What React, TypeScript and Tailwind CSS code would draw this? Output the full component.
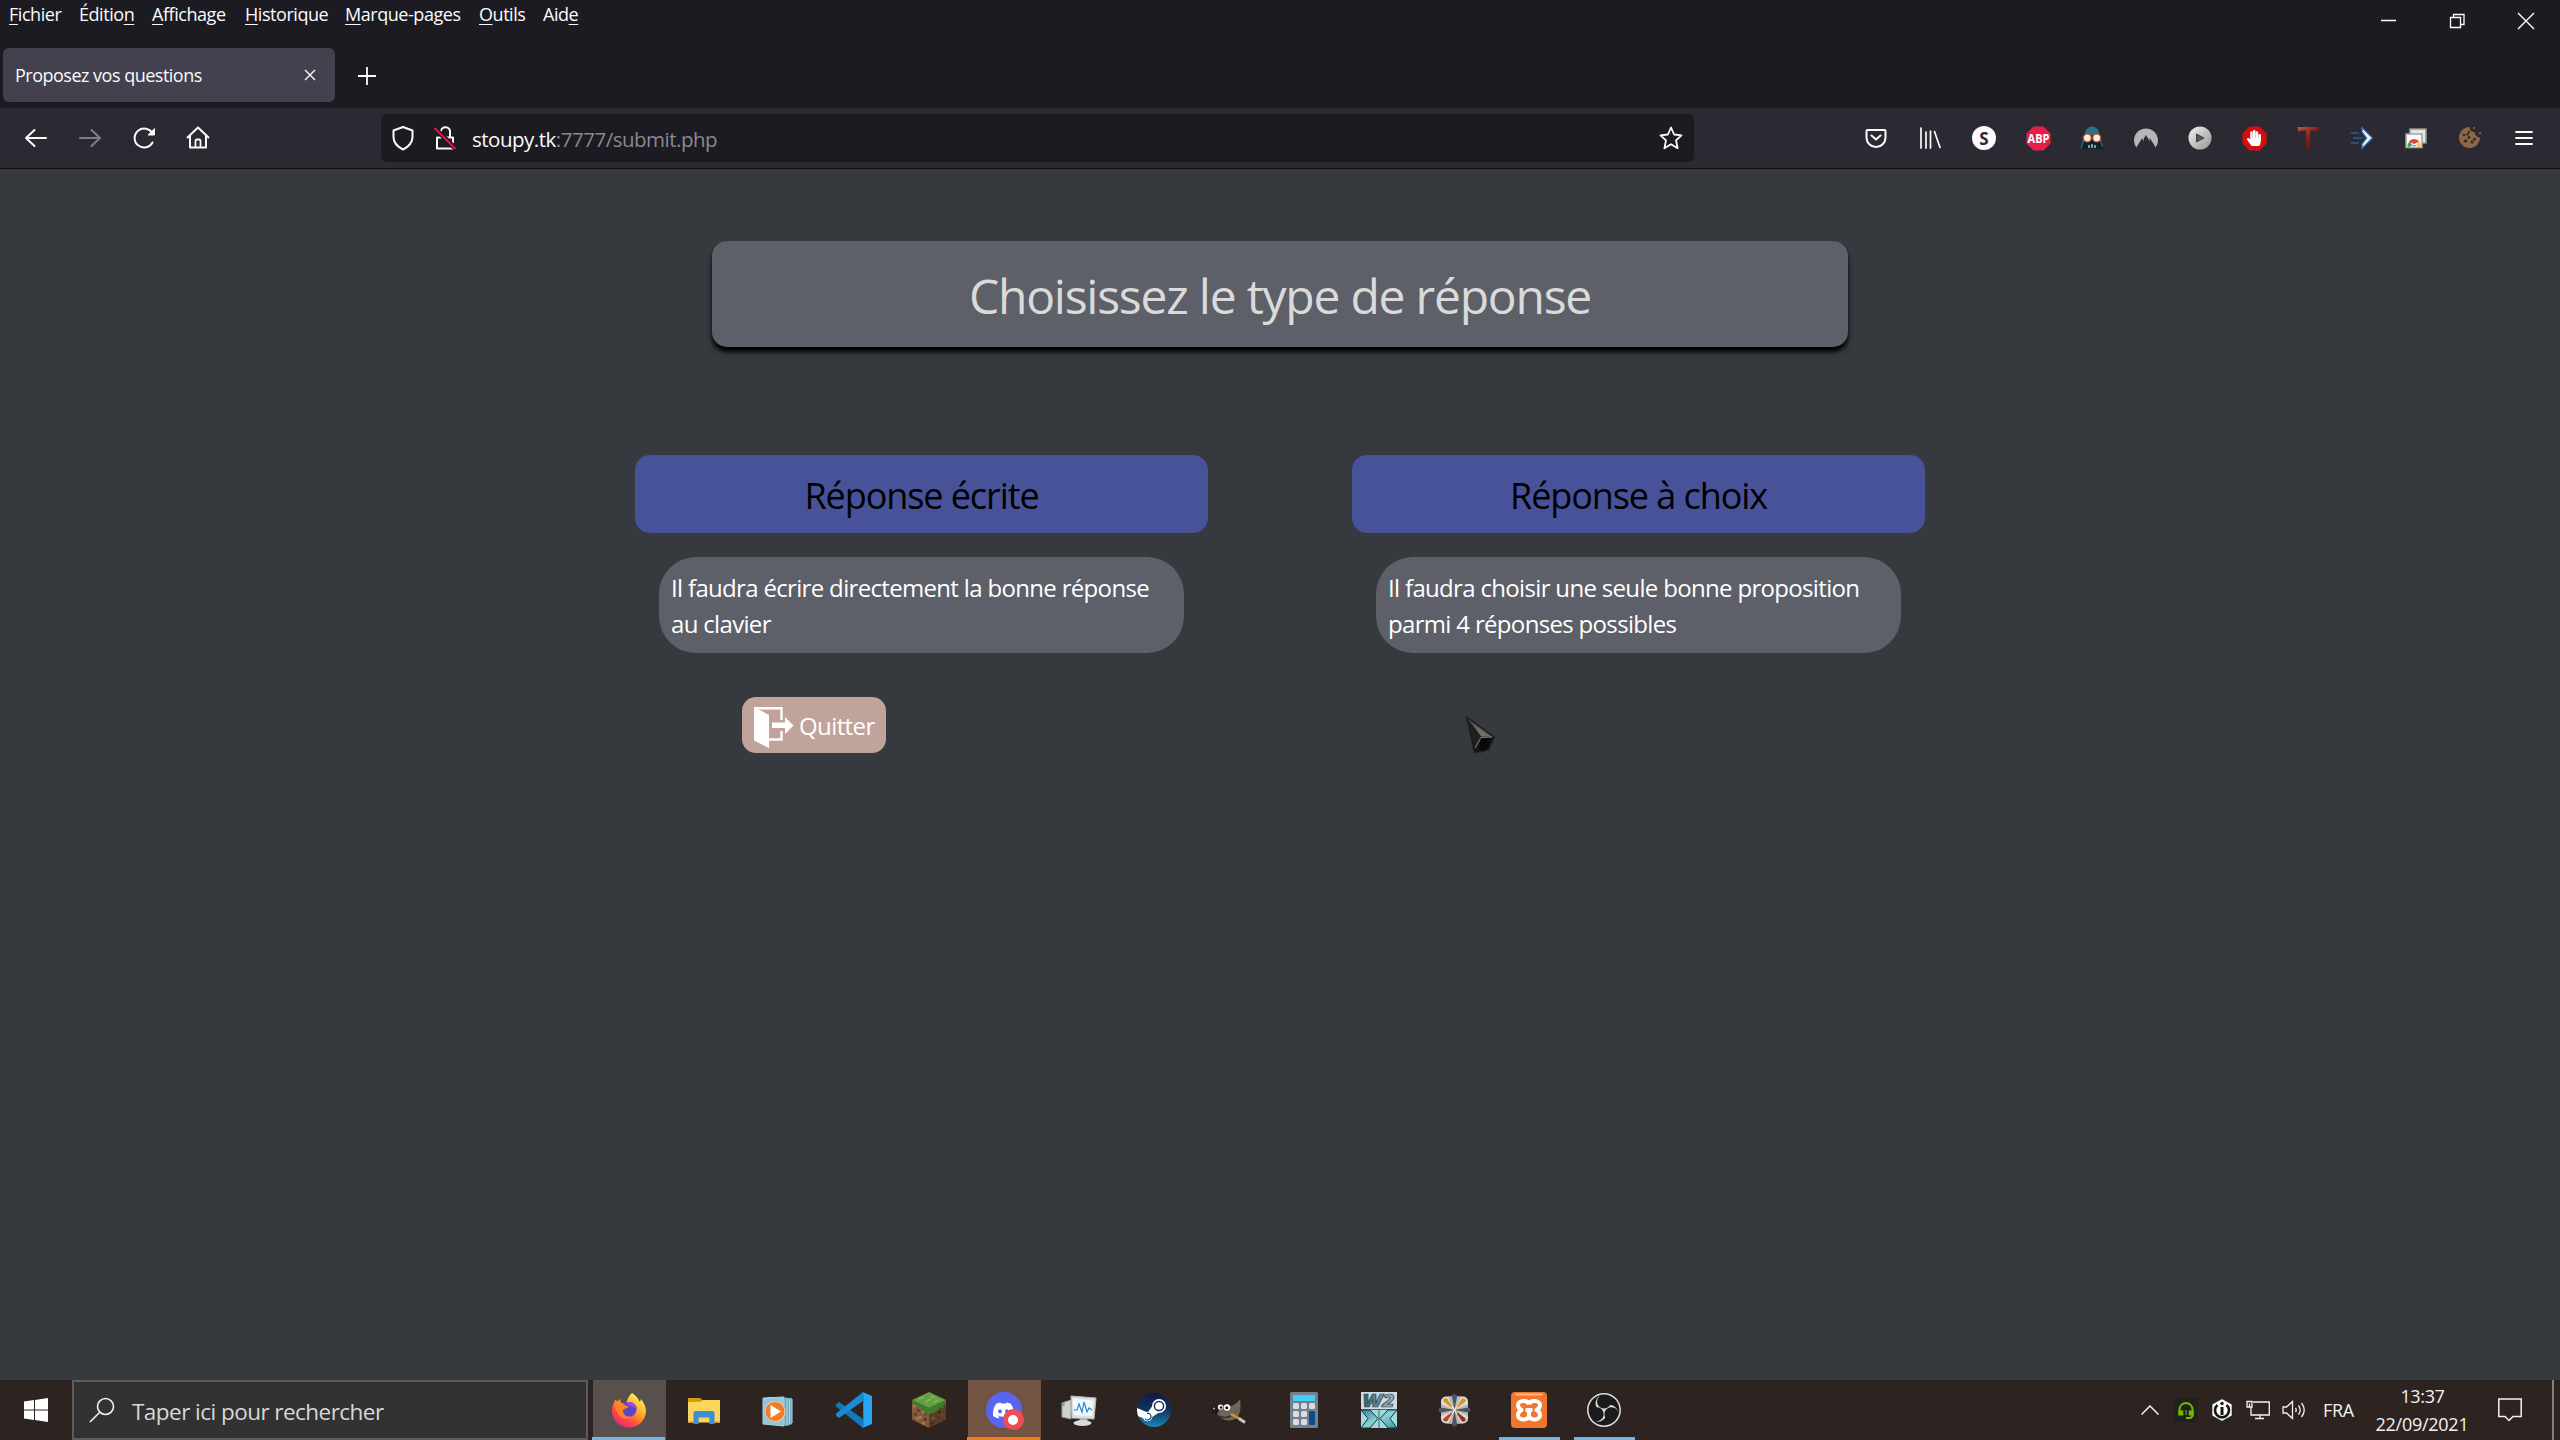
import type { ReactNode } from "react";
import { FaDiscord, FaHandPaper, FaCookieBite } from "react-icons/fa";
import { SiObsstudio, SiNordvpn } from "react-icons/si";

/* ---------- menu bar ---------- */

const MENUS: { before: string; key: string; after: string; box: string }[] = [
  { before: "", key: "F", after: "ichier", box: "w-[70px]" },
  { before: "Éditio", key: "n", after: "", box: "w-[73px]" },
  { before: "", key: "A", after: "ffichage", box: "w-[93px]" },
  { before: "", key: "H", after: "istorique", box: "w-[100px]" },
  { before: "", key: "M", after: "arque-pages", box: "w-[134px]" },
  { before: "", key: "O", after: "utils", box: "w-[64px]" },
  { before: "Aid", key: "e", after: "", box: "w-[60px]" },
];

function MenuBar() {
  return (
    <div className="flex h-[48px] items-start justify-between">
      <nav className="flex pl-[9px] text-[18px] leading-[29px] tracking-[-0.025em] text-[#fbfbfe]">
        {MENUS.map((m) => (
          <span key={m.key} className={`${m.box} whitespace-nowrap`}>
            {m.before}
            <span className="underline decoration-1 underline-offset-[3px]">{m.key}</span>
            {m.after}
          </span>
        ))}
      </nav>
      <div className="flex h-[42px] text-white">
        <svg className="h-[42px] w-[68px]" viewBox="0 0 68 42" stroke="currentColor" strokeWidth="1.5">
          <path d="M26 20.5h15" />
        </svg>
        <svg className="h-[42px] w-[69px]" viewBox="0 0 69 42" fill="none" stroke="currentColor" strokeWidth="1.3">
          <path d="M27.5 17.5h10v10h-10zM30.5 17.5v-3h10.5v10h-3.500" />
        </svg>
        <svg className="h-[42px] w-[68px]" viewBox="0 0 68 42" stroke="currentColor" strokeWidth="1.4">
          <path d="M26 13l16 16M42 13l-16 16" />
        </svg>
      </div>
    </div>
  );
}

function TabStrip() {
  return (
    <div className="flex h-[60px] items-start pl-[3px]">
      <div className="flex h-[54px] w-[332px] items-center justify-between rounded-[6px] bg-[#42414d] pl-[12px] pr-[18px]">
        <span className="text-[18px] tracking-[-0.028em] text-[#fbfbfe]">Proposez vos questions</span>
        <svg className="size-[14px]" viewBox="0 0 14 14" stroke="#fbfbfe" strokeWidth="1.4">
          <path d="M2 2l10 10M12 2L2 12" />
        </svg>
      </div>
      <svg className="mx-[22px] h-[56px] w-[20px]" viewBox="0 0 20 56" stroke="#fbfbfe" strokeWidth="1.800">
        <path d="M10 19v18M1 28h18" />
      </svg>
    </div>
  );
}

/* ---------- toolbar ---------- */

function Slot({ children }: { children: ReactNode }) {
  return <div className="flex h-[60px] w-[54px] items-center justify-center">{children}</div>;
}

function Icon24({ children }: { children: ReactNode }) {
  return (
    <svg className="size-[24px] overflow-visible" viewBox="0 0 24 24" fill="none" stroke="#fbfbfe" strokeWidth="2" strokeLinecap="round" strokeLinejoin="round">
      {children}
    </svg>
  );
}

function Extensions() {
  return (
    <div className="flex">
      <Slot>
        <Icon24>
          <path d="M3.500 4h17a1 1 0 0 1 1 1v6.500a9.500 9.500 0 0 1-19 0V5a1 1 0 0 1 1-1z" />
          <path d="M7.500 9.500L12 13.500l4.500-4" />
        </Icon24>
      </Slot>
      <Slot>
        <Icon24>
          <path d="M3 2v20M8 6v16M12.500 5v17M16.500 5.500L22 21.500" strokeWidth="1.700" />
        </Icon24>
      </Slot>
      <Slot>
        <span className="flex size-[24px] items-center justify-center rounded-full bg-[#fbfbfe] text-[17px] font-bold leading-none text-[#2b2a33]">S</span>
      </Slot>
      <Slot>
        <svg className="size-[25px]" viewBox="0 0 25 25">
          <path d="M7.500 0.500h10l7 7v10l-7 7h-10l-7-7v-10z" fill="#e81e48" />
          <text x="12.500" y="16.700" textAnchor="middle" textLength="22" lengthAdjust="spacingAndGlyphs" fontSize="11.500" fontWeight="700" fill="#fff">ABP</text>
        </svg>
      </Slot>
      <Slot>
        <svg className="size-[24px]" viewBox="0 0 24 24">
          <path d="M12 0.500C7 0.500 5 4 4.500 10L0 23h24l-4.500-13C19 4 17 0.500 12 0.500z" fill="#0f2129" />
          <path d="M12 0.500c-4.500 0-7 3.500-7.500 9h15C19 4 16.500 0.500 12 0.500z" fill="#2a7381" />
          <path d="M4 12L1 22.500M20 12l2.500 9" stroke="#2a7381" strokeWidth="1.300" />
          <circle cx="7.300" cy="12" r="3.900" fill="#fff2e4" stroke="#cb542f" strokeWidth="1.200" />
          <circle cx="16.700" cy="12" r="3.900" fill="#fff2e4" stroke="#cb542f" strokeWidth="1.200" />
          <path d="M9 19v3M12 18v4M15 19v3" stroke="#c3dce0" strokeWidth="1.300" />
        </svg>
      </Slot>
      <Slot>
        <SiNordvpn className="size-[24px] text-[#b6b6b9]" />
      </Slot>
      <Slot>
        <svg className="size-[24px]" viewBox="0 0 24 24">
          <defs>
            <linearGradient id="play" x1="0" y1="0" x2="1" y2="1">
              <stop offset="0" stopColor="#f4f4f2" />
              <stop offset="1" stopColor="#929292" />
            </linearGradient>
          </defs>
          <circle cx="12" cy="12" r="11.500" fill="url(#play)" />
          <path d="M8.500 8l7.500 4-7.500 4z" fill="#565656" stroke="#3f3f3f" />
        </svg>
      </Slot>
      <Slot>
        <div className="relative flex size-[25px] items-center justify-center">
          <svg className="absolute inset-0 size-[25px]" viewBox="0 0 25 25">
            <path d="M7.500 0.500h10l7 7v10l-7 7h-10l-7-7v-10z" fill="#d80d0d" />
          </svg>
          <FaHandPaper className="relative h-[18px] w-[14px] text-white" />
        </div>
      </Slot>
      <Slot>
        <svg className="size-[24px]" viewBox="0 0 24 24">
          <defs>
            <linearGradient id="tee" x1="0" y1="0" x2="1" y2="1">
              <stop offset="0" stopColor="#c05a50" />
              <stop offset="0.500" stopColor="#8e1d14" />
              <stop offset="1" stopColor="#5c120c" />
            </linearGradient>
          </defs>
          <path d="M1.500 1h21v5l-2-1.500h-6l-.5 18.500h-3.500l-.5-18.500H4.500L2.500 6z" fill="url(#tee)" />
        </svg>
      </Slot>
      <Slot>
        <svg className="size-[24px] overflow-visible" viewBox="0 0 24 24">
          <path d="M1 7h8M3 12h10M1 17h8" stroke="#2d5d8b" strokeWidth="1.500" />
          <path d="M12 1.500L22.500 12 12 22.500V18l4.500-6L12 6z" fill="#e8f5ff" stroke="#2e6ca5" strokeWidth="1.300" />
        </svg>
      </Slot>
      <Slot>
        <svg className="size-[24px]" viewBox="0 0 24 24">
          <path d="M6 3h16v14H6z" fill="#e5e5e3" stroke="#969696" strokeWidth="1.500" />
          <path d="M2 8h16v13.500H2z" fill="#fafafa" stroke="#a2a2a2" strokeWidth="1.500" />
          <path d="M3.500 20.700a6.500 6.500 0 0 1 2-5.200l4.500 5.200z" fill="#3da153" />
          <path d="M4.800 15.500a6.500 6.500 0 0 1 10.400 0L10 18z" fill="#dc4437" />
          <path d="M15 15a6.500 6.500 0 0 1 1.500 5.700H11z" fill="#f8c93a" />
          <path d="M7 20.700a3.100 3.100 0 0 1 6 0z" fill="#4688f1" stroke="#fff" strokeWidth=".8" />
        </svg>
      </Slot>
      <Slot>
        <div className="relative size-[22px]">
          <FaCookieBite className="size-[21px] text-[#8d6848]" />
          <svg className="absolute inset-0 size-[22px] overflow-visible" viewBox="0 0 22 22" fill="#3b271b">
            <circle cx="5" cy="8" r="1.300" /><circle cx="10" cy="5" r="1.200" /><circle cx="6" cy="14" r="1.500" />
            <circle cx="13" cy="15" r="1.500" /><circle cx="10" cy="10.500" r="1.400" /><circle cx="16" cy="12" r="1" />
            <circle cx="15" cy="1" r="1" fill="#8d6848" /><circle cx="21" cy="6" r="1.100" fill="#8d6848" />
          </svg>
        </div>
      </Slot>
      <Slot>
        <svg className="size-[18px]" viewBox="0 0 18 18" stroke="#fbfbfe" strokeWidth="1.800" strokeLinecap="round">
          <path d="M1 3h16M1 9h16M1 15h16" />
        </svg>
      </Slot>
    </div>
  );
}

function Toolbar() {
  return (
    <div className="flex h-[61px] items-start border-b border-[#0c0c0d] bg-[#2b2a33] pl-[9px] pr-[9px]">
      <div className="flex w-[372px]">
        <Slot>
          <Icon24><path d="M2 12h20M10.500 4L2 12l8.500 8" /></Icon24>
        </Slot>
        <Slot>
          <div className="opacity-40"><Icon24><path d="M2 12h20M13.500 4L22 12l-8.500 8" /></Icon24></div>
        </Slot>
        <Slot>
          <Icon24>
            <path d="M20.500 16.500A9.500 9.500 0 1 1 20.500 7.500" />
            <path d="M22.500 3v6h-6z" fill="#fbfbfe" strokeWidth="1" />
          </Icon24>
        </Slot>
        <Slot>
          <Icon24>
            <path d="M1.500 11.500L12 1.500l10.500 10M4 10v11.500h16V10" />
            <path d="M9.500 21v-6a1.500 1.500 0 0 1 1.500-1.500h2a1.500 1.500 0 0 1 1.500 1.500v6" strokeWidth="1.800" />
          </Icon24>
        </Slot>
      </div>
      <div className="mt-[6px] flex h-[48px] w-[1313px] items-center rounded-[6px] bg-[#1c1b22] pl-[10px] pr-[11px]">
        <Icon24><path d="M12 1l9.500 3.500v6.500c0 6-4.500 10-9.500 12.500C7 21 2.500 17 2.500 11V4.500z" /></Icon24>
        <div className="ml-[18px]">
          <Icon24>
            <path d="M4 11.500h16v11H4z" />
            <path d="M8 11V6.500a4.500 4.500 0 0 1 9-1.500v6" />
            <path d="M2 2.500l20 19.500" stroke="#1c1b22" strokeWidth="5" />
            <path d="M2 2.500l20 20" stroke="#e4123f" />
          </Icon24>
        </div>
        <span className="ml-[15px] grow whitespace-nowrap pt-[2px] text-[20.5px] tracking-[-0.024em] text-[#8a8991]">
          <span className="text-[#fbfbfe]">stoupy.tk</span>:7777/submit.php
        </span>
        <Icon24><path d="M12 1.500l3.100 7 7.400.8-5.500 5.100 1.600 7.800L12 18.300l-6.600 3.900L7 14.400 1.500 9.300l7.400-.8z" strokeWidth="1.800" /></Icon24>
      </div>
      <div className="ml-auto flex w-[702px] shrink-0">
        <Extensions />
      </div>
    </div>
  );
}

/* ---------- web page ---------- */

function Choice({ title, text }: { title: string; text: ReactNode }) {
  return (
    <section className="w-[573px]">
      <h2 className="flex h-[78px] items-center justify-center rounded-[15px] bg-[#485298] pt-[4px] text-[36px] tracking-[-0.030em] text-black">{title}</h2>
      <p className="mx-[24px] mt-[24px] h-[96px] whitespace-nowrap rounded-[37px] bg-[#5d6068] px-[12px] pt-[13px] text-[24px] leading-[36px] tracking-[-0.028em] text-white">{text}</p>
    </section>
  );
}

function Cursor() {
  return (
    <svg className="absolute left-[1464px] top-[715px] h-[40px] w-[34px]" viewBox="0 0 34 40">
      <path d="M2 1l29 21-3 6-3 7-7 2-8 1z" fill="#151515" stroke="#26282a" strokeWidth="1" />
      <path d="M3 3l26 19-12 0z" fill="#4c4d4a" />
      <path d="M3 3l14 19-6 13z" fill="#20211f" />
      <path d="M9 9l17 12-9 0z" fill="#8d8e88" opacity=".55" />
      <path d="M17 23l9 0-1 8-5 5-5-2z" fill="#080808" />
      <path d="M11 33l6-10.500 11-.5" fill="none" stroke="#85867f" strokeWidth="1" />
    </svg>
  );
}

function Page() {
  return (
    <main className="h-[1211px] bg-[#36393e]">
      <h1 className="mx-auto flex h-[106px] w-[1136px] translate-y-[72px] items-center justify-center rounded-[15px] bg-[#5d6068] pt-[4px] text-[48px] tracking-[-0.0255em] text-[#dadada] shadow-[0_5px_5px_#000]">
        Choisissez le type de réponse
      </h1>
      <div className="flex gap-[144px] pl-[635px] pt-[180px]">
        <Choice title="Réponse écrite" text={<>Il faudra écrire directement la bonne réponse<br />au clavier</>} />
        <Choice title="Réponse à choix" text={<>Il faudra choisir une seule bonne proposition<br />parmi 4 réponses possibles</>} />
      </div>
      <button className="ml-[742px] mt-[44px] flex h-[56px] w-[144px] items-center rounded-[14px] bg-[#c0a39a] pl-[12px] text-[24px] tracking-[-0.025em] text-white">
        <svg className="mr-[5px] h-[41px] w-[40px] shrink-0 translate-y-[2px]" viewBox="0 0 40 41">
          <path d="M0 0l15 8v33L0 33.500z" fill="#fff" />
          <path d="M0 1.200h27.500V13M27.500 24v8.500H15" fill="none" stroke="#fff" strokeWidth="2.400" />
          <path d="M18 15.500h13V10l8.500 8.500L31 27v-6H18z" fill="#fff" />
        </svg>
        <span className="pt-[2px]">Quitter</span>
      </button>
    </main>
  );
}

/* ---------- taskbar ---------- */

function FirefoxIcon() {
  return (
    <svg className="size-[36px]" viewBox="0 0 36 36">
      <defs>
        <linearGradient id="fx" x1=".85" y1=".15" x2=".25" y2="1">
          <stop offset="0" stopColor="#fff04a" />
          <stop offset=".4" stopColor="#ffa026" />
          <stop offset=".7" stopColor="#ff4a48" />
          <stop offset="1" stopColor="#e8257a" />
        </linearGradient>
      </defs>
      <path d="M21 1c5 3 6 6 8 9l1-3c3 4 5 8 5 12a17 16.500 0 0 1-34 0c0-4 1-8 4-12l1 3 3-3 1 4 5 1c1-5 3-8 6-11z" fill="url(#fx)" />
      <circle cx="18" cy="17.500" r="7.500" fill="#5b45c9" />
      <path d="M15 11c5-3 11 1 11 7-1-2-3-3-5-3z" fill="#9a4be8" />
      <path d="M4 12c4-1 10 0 14 3-2 2-4 1-6 3 0 5 4 8 9 6-4 5-16 4-17-12z" fill="#ff8226" />
    </svg>
  );
}

function FolderIcon() {
  return (
    <svg className="size-[36px]" viewBox="0 0 36 36">
      <path d="M2 6h12l3 2.500h15V15H2z" fill="#d99c11" />
      <path d="M2 10h12l3-2h17v22.500H2z" fill="#fcd55c" />
      <path d="M7.500 32V21a2 2 0 0 1 2-2h17a2 2 0 0 1 2 2v11h-5v-6.500h-11V32z" fill="#3d8fd4" />
      <path d="M2 29h5.500v1.500H2zM28.500 29H34v1.500h-5.500z" fill="#e9b53a" />
    </svg>
  );
}

function MediaIcon() {
  return (
    <svg className="size-[36px] -translate-x-[2px]" viewBox="0 0 36 36">
      <path d="M9 5l24 1v26l-5 2L9 31z" fill="#6aa7bd" />
      <path d="M28 6v27M30.500 7v25.500M33 7v24" stroke="#b5dcea" strokeWidth="1" />
      <path d="M4 6l21-1v29L4 32z" fill="#91c5d8" stroke="#a9d4e2" />
      <circle cx="16" cy="19.500" r="10" fill="#f07c29" stroke="#f9cba4" />
      <path d="M11.500 13L22 19.500 11.500 26z" fill="#fff" />
    </svg>
  );
}

function CodeIcon() {
  return (
    <svg className="size-[36px]" viewBox="0 0 36 36">
      <path d="M0 12.500L3 10l24 17v9L0 14.500z" fill="#1278bd" />
      <path d="M0 23.500L3 26 27 9V0L0 21.500z" fill="#1a8ad2" />
      <path d="M26.500 0L36 4v28l-9.500 4c.6-1 .7-2 .7-3V3c0-1-.1-2-.7-3z" fill="#27a4f2" />
    </svg>
  );
}

const DIRT: [number, number, string][] = [
  [3, 14, "#a27752"], [7, 18, "#5a3b25"], [12, 20, "#a27752"], [4, 22, "#5a3b25"], [9, 25, "#a98058"], [14, 27, "#4e3422"],
  [14, 22, "#6b4a31"], [6, 26, "#a27752"], [20, 21, "#49301f"], [24, 18, "#7a5538"], [28, 20, "#3e291b"], [31, 15, "#7a5538"],
  [22, 26, "#7a5538"], [27, 25, "#4b3120"], [31, 22, "#6b4a31"], [12, 31, "#a27752"], [21, 31, "#3e291b"],
];

function BlockIcon() {
  return (
    <svg className="size-[36px]" viewBox="0 0 36 36">
      <path d="M1 9l17 8v19L1 27.500z" fill="#815b3d" />
      <path d="M35 9l-17 8v19l17-8.500z" fill="#5a3e29" />
      {DIRT.map(([x, y, c]) => (
        <rect key={`${x}-${y}`} x={x - 1} y={y - 1} width="2.600" height="2.600" fill={c} />
      ))}
      <path d="M1 8l17 8 17-8v4l-3 1v2l-4 .5v2.500l-4 .5v2l-3 1-3 1-3-2v-1l-4-1v-2.500l-4-.5v-2.500l-3 0-3-2z" fill="#427a2e" />
      <path d="M1 8l17-8 17 8-17 8z" fill="#64a043" />
      <path d="M8 7l5-2M14 10l6-3M20 4l4 2M22 11l5-3" stroke="#7dba58" strokeWidth="1.500" />
    </svg>
  );
}

function DiscordIcon() {
  return (
    <div className="relative size-[36px]">
      <div className="flex size-[36px] items-center justify-center rounded-full bg-[#5865f2]">
        <FaDiscord className="size-[23px] text-white" />
      </div>
      <div className="absolute left-[17px] top-[17px] flex size-[21px] items-center justify-center rounded-full bg-[#ed4e55]">
        <div className="size-[10px] rounded-full bg-white" />
      </div>
    </div>
  );
}

function MonitorIcon() {
  return (
    <svg className="size-[36px]" viewBox="0 0 36 36">
      <path d="M1 11l9-3v19l-9-2z" fill="#cfd0d0" stroke="#9a9a9a" />
      <path d="M2.500 11v3" stroke="#45c63c" strokeWidth="2" />
      <path d="M10 4l25 2-2 21-22-1z" fill="#dfe0e0" stroke="#b5b5b5" />
      <path d="M12 6.500l20 2-1 15.500-18-1z" fill="#f2f9fe" />
      <path d="M13 18h3l2-6 3 8 2-10 3 10 2-4 3 2" fill="none" stroke="#3184c6" strokeWidth="1.200" />
      <path d="M19 26h7l1 4h-9z" fill="#b5b5b5" />
      <ellipse cx="21.500" cy="31" rx="9" ry="3" fill="#d9dada" />
    </svg>
  );
}

function SteamIcon() {
  return (
    <svg className="size-[34px]" viewBox="0 0 34 34">
      <defs>
        <linearGradient id="steam" x1="0" y1="0" x2="0" y2="1">
          <stop offset="0" stopColor="#111a3f" />
          <stop offset=".5" stopColor="#103561" />
          <stop offset="1" stopColor="#1688ba" />
        </linearGradient>
        <clipPath id="disc"><circle cx="17" cy="17" r="17" /></clipPath>
      </defs>
      <g clipPath="url(#disc)">
        <rect width="34" height="34" fill="url(#steam)" />
        <path d="M-2 18l12 5" stroke="#fff" strokeWidth="7" />
        <circle cx="10.500" cy="23.500" r="4.800" fill="#fff" />
        <path d="M9 22l7-10 7 7-11 7z" fill="#fff" />
        <circle cx="22" cy="13" r="7" fill="#fff" />
        <circle cx="22" cy="13" r="4.600" fill="none" stroke="#14305a" strokeWidth="1.500" />
        <path d="M8 25.500a3.300 3.300 0 1 0 2-5.200" fill="none" stroke="#14507f" strokeWidth="1.200" />
      </g>
    </svg>
  );
}

function GimpIcon() {
  return (
    <svg className="size-[36px]" viewBox="0 0 36 36">
      <path d="M4 15c5 2 7-3 12-1 6 1 10-3 13-7 1 7 1 13-3 19-6 4-15 3-19-3z" fill="#6d675b" />
      <circle cx="4" cy="18" r="3.800" fill="#1d1d1f" />
      <circle cx="3" cy="16.500" r="1.100" fill="#aaa" />
      <circle cx="9.500" cy="15" r="2.600" fill="#fff" />
      <circle cx="16" cy="15.500" r="3.200" fill="#fff" />
      <circle cx="10" cy="15.500" r="1.300" fill="#111" />
      <circle cx="15.800" cy="15.800" r="1.500" fill="#111" />
      <path d="M8 24c4 2 8 2 12 0" stroke="#35322c" strokeWidth="1.500" fill="none" />
      <path d="M20 22l9 5" stroke="#e98a28" strokeWidth="2.400" />
      <path d="M28 26.500l6 4" stroke="#c9c9c9" strokeWidth="3" />
    </svg>
  );
}

function CalcIcon() {
  return (
    <svg className="size-[36px]" viewBox="0 0 36 36">
      <rect x="4" width="28" height="36" rx="1.500" fill="#75828d" />
      <rect x="7" y="3" width="22" height="6" fill="#40cdf6" />
      {[11, 19, 27].map((y) => (
        <g key={y} fill="#d7dde1">
          <rect x="7" y={y} width="6" height="6" rx="1.500" />
          <rect x="15" y={y} width="6" height="6" rx="1.500" />
          {y === 11 && <rect x="23" y={y} width="6" height="6" rx="1.500" />}
        </g>
      ))}
      <rect x="23" y="19" width="6" height="14" rx="1" fill="#114a8b" />
    </svg>
  );
}

function W2xIcon() {
  return (
    <svg className="size-[36px] overflow-visible" viewBox="0 0 36 36">
      <defs>
        <linearGradient id="wx" x1="0" y1="0" x2="1" y2="1">
          <stop offset="0" stopColor="#2f8494" />
          <stop offset=".5" stopColor="#8fd0d6" />
          <stop offset="1" stopColor="#3a93a2" />
        </linearGradient>
        <linearGradient id="wt" x1="0" y1="0" x2="1" y2="0">
          <stop offset="0" stopColor="#2b6472" />
          <stop offset="1" stopColor="#a9b4ba" />
        </linearGradient>
      </defs>
      <rect width="36" height="36" fill="#a5dadd" />
      <rect width="36" height="17" fill="#d2dade" />
      <text x="17.500" y="14.500" textAnchor="middle" textLength="32" lengthAdjust="spacingAndGlyphs" fontSize="17" fontWeight="800" fontStyle="italic" fill="url(#wt)" stroke="#2d4a55" strokeWidth=".7">W2</text>
      <path d="M0 18h9l8 8.500L9 36H0l7-9.500zM36 18h-9l-8 8.500 8 9.500h9l-7-9.500z" fill="url(#wx)" stroke="#0d3944" />
      <path d="M18 17v19M0 17.500h36" stroke="#1b4f5b" strokeWidth=".8" />
    </svg>
  );
}

function PinwheelIcon() {
  return (
    <svg className="size-[36px]" viewBox="0 0 36 36">
      <rect x="5" y="4.500" width="27" height="27" rx="5" fill="#d9dad9" />
      <path d="M18.500 18L12 4.500h13zM18.500 18L12 31.500h13zM18.500 18L5 12v12zM18.500 18L32 12v12z" fill="#b3b6b9" />
      <path d="M18.500 18L16 4.500a2.500 2.500 0 0 1 5 0zM18.500 18L16 32a2.500 2.500 0 0 0 5 0zM18.500 18L5 15.500a2.500 2.500 0 0 0 0 5zM18.500 18L32 15.500a2.500 2.500 0 0 1 0 5z" fill="#50555d" />
      <path d="M18.500 18L7.500 9.500C7 6.500 8.500 6 11 6.500z" fill="#e0921d" />
      <path d="M18.500 18L26 6.500c3-.5 4.500 1 3.500 3z" fill="#e0921d" />
      <path d="M18.500 18L11 29.500c-3 .5-4.500-1-3.500-3z" fill="#c2461d" />
      <path d="M18.500 18l11 8.500c.5 3-1 3.500-3.500 3z" fill="#9c2f18" />
      <path d="M16 14l2.500 4L21 14M16 22l2.500-4 2.500 4" stroke="#fff" strokeWidth="1" fill="none" />
    </svg>
  );
}

function XamppIcon() {
  return (
    <svg className="size-[36px]" viewBox="0 0 36 36">
      <rect width="36" height="36" rx="4" fill="#f0762b" />
      <rect x="4" y="1.500" width="28" height="2" rx="1" fill="#fbb98c" />
      <path d="M14.500 18h7M18 12.500c-1-5-11-4.500-11 .5 0 2.500 1.500 4 3.500 5-2 1-3.500 2.500-3.500 5 0 5.500 9.500 6 11 1M18 12.500c1-5 11-4.500 11 .5 0 2.500-1.500 4-3.500 5 2 1 3.500 2.500 3.500 5 0 5.500-9.500 6-11 1M18 24v-6" fill="none" stroke="#fff" strokeWidth="4" strokeLinejoin="round" />
    </svg>
  );
}

function ObsIcon() {
  return (
    <div className="size-[34px] rounded-full bg-[#1b1a1d]">
      <SiObsstudio className="size-[34px] text-[#dfdcdc]" />
    </div>
  );
}

const APPS: { id: string; icon: ReactNode; face?: string; bar?: string }[] = [
  { id: "firefox", icon: <FirefoxIcon />, face: "bg-[#57504d]", bar: "w-full bg-[#78b4e0]" },
  { id: "files", icon: <FolderIcon /> },
  { id: "media", icon: <MediaIcon /> },
  { id: "code", icon: <CodeIcon /> },
  { id: "block", icon: <BlockIcon /> },
  { id: "discord", icon: <DiscordIcon />, face: "bg-[#735341]", bar: "w-full bg-[#f27a18]" },
  { id: "monitor", icon: <MonitorIcon /> },
  { id: "steam", icon: <SteamIcon /> },
  { id: "gimp", icon: <GimpIcon /> },
  { id: "calc", icon: <CalcIcon /> },
  { id: "w2x", icon: <W2xIcon /> },
  { id: "pinwheel", icon: <PinwheelIcon /> },
  { id: "xampp", icon: <XamppIcon />, bar: "left-[6px] w-[61px] bg-[#78b4e0]" },
  { id: "obs", icon: <ObsIcon />, bar: "left-[6px] w-[61px] bg-[#78b4e0]" },
];

function Tray() {
  return (
    <div className="flex h-full items-center text-[18px] text-[#f3f2f2]">
      <svg className="h-[10px] w-[18px]" viewBox="0 0 18 10" fill="none" stroke="currentColor" strokeWidth="1.500"><path d="M0.500 9.500L9 1l8.500 8.500" /></svg>
      <div className="ml-[15px] flex size-[24px] items-center justify-center bg-[#20211f]">
        <svg className="size-[18px]" viewBox="0 0 18 18" fill="none" stroke="#76b900" strokeWidth="2">
          <path d="M2.500 10V8.500a6.500 6.500 0 0 1 13 0V15l-2 2H9" />
          <path d="M2.500 9.500v5M5 9.500v5M15.500 9.500v5M13 9.500v5" strokeWidth="2.500" />
          <path d="M9 9v5" strokeWidth="1" />
        </svg>
      </div>
      <svg className="ml-[13px] h-[24px] w-[22px]" viewBox="0 0 22 24">
        <path d="M11 .8l10 5.500v11.400l-10 5.500-10-5.500V6.300z" fill="#fff" stroke="#111" strokeWidth=".6" />
        <path d="M6.500 7a7 7 0 1 0 9 0" fill="none" stroke="#161616" strokeWidth="2.600" />
        <path d="M11 9v8" stroke="#161616" strokeWidth="3" />
        <circle cx="11" cy="5.500" r="1.700" fill="#161616" />
      </svg>
      <svg className="ml-[13px] h-[20px] w-[24px]" viewBox="0 0 24 20" fill="none" stroke="currentColor" strokeWidth="1.300">
        <path d="M7 2h16.300v13H5V9M14 15v3.500M9 18.500h9M1 1.500h5v5.500H1zM3.500 3.500v3.500M5 9V7" />
      </svg>
      <svg className="ml-[12px] h-[20px] w-[24px]" viewBox="0 0 24 20" fill="none" stroke="currentColor" strokeWidth="1.300">
        <path d="M1 7v6h3.500l6 5.500V1.500l-6 5.500zM13.500 8q1.500 2 0 4M16.500 5.500q3.500 4.500 0 9M19.500 3q5.500 7 0 14" />
      </svg>
      <span className="ml-[17px] w-[48px] tracking-[-0.015em]">FRA</span>
      <div className="w-[102px] whitespace-nowrap text-center leading-[28px]">
        <div className="pl-px tracking-[-0.02em]">13:37</div>
        <div className="tracking-[-0.015em]">22/09/2021</div>
      </div>
      <svg className="ml-[25px] h-[24px] w-[24px]" viewBox="0 0 24 24" fill="none" stroke="currentColor" strokeWidth="1.500">
        <path d="M.8 1h22.400v17.500H15l-4 4-4-4H.8z" />
      </svg>
      <div className="ml-[30px] mr-[6px] h-full w-[2px] bg-[#85807e]" />
    </div>
  );
}

function Taskbar() {
  return (
    <footer className="flex h-[60px] justify-between bg-[#2d2421]">
      <div className="flex">
        <div className="flex w-[72px] items-center justify-center">
          <svg className="size-[24px]" viewBox="0 0 24 24" fill="#fff">
            <path d="M0 3.400L10 2v9.500H0zM11 1.900L24 0v11.500H11zM0 12.500h10V22L0 20.600zM11 12.500h13V24l-13-1.900z" />
          </svg>
        </div>
        <div className="flex w-[516px] items-center border-2 border-[#5e5c5b] bg-[#323232] pl-[16px]">
          <svg className="size-[24px] overflow-visible" viewBox="0 0 24 24" fill="none" stroke="#f0f0f0" strokeWidth="1.600">
            <circle cx="15.500" cy="8.500" r="8" />
            <path d="M10 14L0 24" />
          </svg>
          <span className="ml-[18px] whitespace-nowrap pt-[3px] text-[22.5px] tracking-[-0.024em] text-[#d8d8d8]">Taper ici pour rechercher</span>
        </div>
        <div className="ml-[4px] flex">
          {APPS.map((a) => (
            <div key={a.id} className="flex w-[75px] justify-center">
              <div className={`relative flex w-[73px] items-center justify-center pr-[2px] ${a.face ?? ""}`}>
                {a.icon}
                {a.bar && <div className={`absolute bottom-0 h-[3px] ${a.bar}`} />}
              </div>
            </div>
          ))}
        </div>
      </div>
      <Tray />
    </footer>
  );
}

export default function App() {
  return (
    <div className="relative h-[1440px] w-[2560px] overflow-hidden bg-[#1c1b22] font-['Open_Sans',sans-serif]">
      <MenuBar />
      <TabStrip />
      <Toolbar />
      <Page />
      <Taskbar />
      <Cursor />
    </div>
  );
}
